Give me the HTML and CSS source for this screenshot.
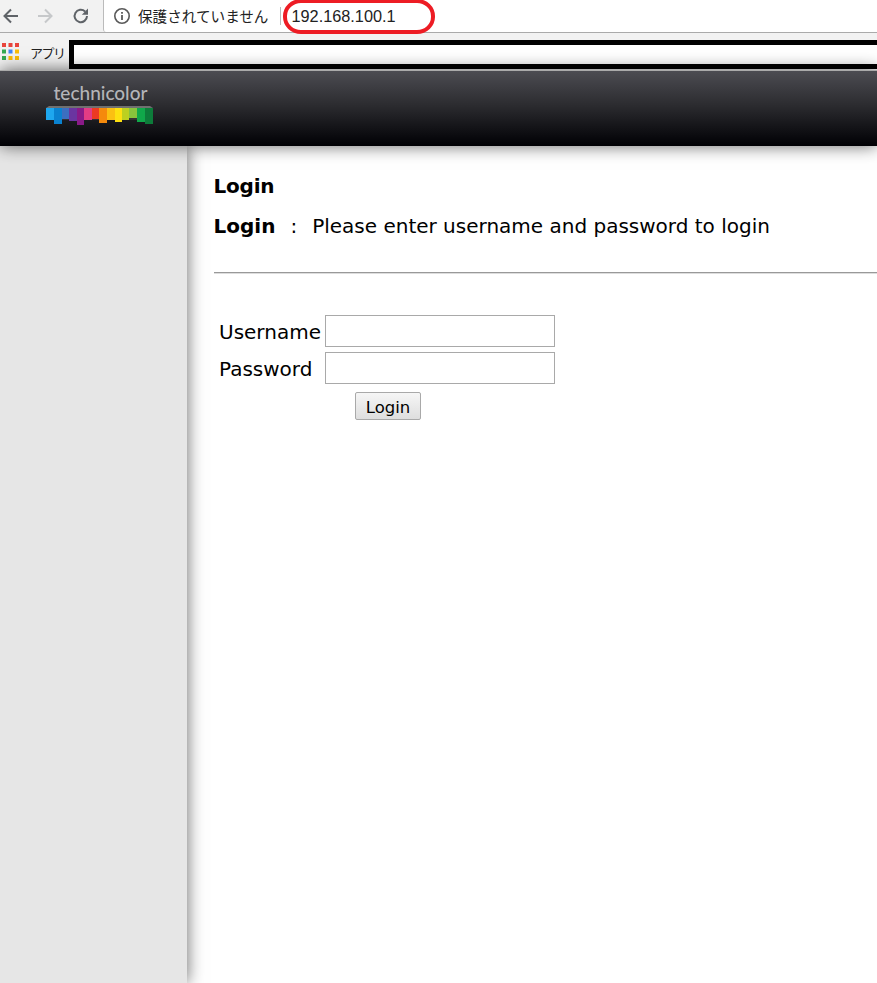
FILE: index.html
```html
<!DOCTYPE html>
<html lang="ja">
<head>
<meta charset="utf-8">
<title>Login</title>
<link rel="stylesheet" href="styles.css">
</head>
<body>
<div class="toolbar">
  <svg class="nav-icon back" viewBox="0 0 18 18"><path d="M16 9H3M9 2.5 2.5 9 9 15.5" fill="none" stroke="#5f6368" stroke-width="2"/></svg>
  <svg class="nav-icon forward" viewBox="0 0 18 18"><path d="M2 9h13M9 2.5 15.5 9 9 15.5" fill="none" stroke="#c6c8ca" stroke-width="2"/></svg>
  <svg class="nav-icon reload" viewBox="0 0 18 18"><path d="M15 9a6.2 6.2 0 1 1-1.9-4.5" fill="none" stroke="#5f6368" stroke-width="2"/><path d="M16 1.5v6.2H9.800z" fill="#5f6368"/></svg>
  <div class="omnibox">
    <svg class="info-icon" viewBox="0 0 18 18"><circle cx="9" cy="9" r="7.2" fill="none" stroke="#5a5a5a" stroke-width="1.600"/><path d="M8.100 8h1.800v5H8.100zM8.100 5h1.800v1.800H8.100z" fill="#5a5a5a"/></svg>
    <span class="security">保護されていません</span>
    <span class="omni-sep"></span>
    <span class="url">192.168.100.1</span>
    <span class="url-mark"></span>
  </div>
</div>
<div class="bookmarks">
  <svg class="apps-icon" viewBox="0 0 18 18">
    <rect x="0" y="0" width="4" height="4" fill="#e8453c"/><rect x="6.500" y="0" width="4" height="4" fill="#e8453c"/><rect x="13" y="0" width="4" height="4" fill="#e8453c"/>
    <rect x="0" y="6.500" width="4" height="4" fill="#34a853"/><rect x="6.500" y="6.500" width="4" height="4" fill="#4285f4"/><rect x="13" y="6.500" width="4" height="4" fill="#fbbc05"/>
    <rect x="0" y="13" width="4" height="4" fill="#34a853"/><rect x="6.500" y="13" width="4" height="4" fill="#fbbc05"/><rect x="13" y="13" width="4" height="4" fill="#fbbc05"/>
  </svg>
  <span class="apps-label">アプリ</span>
  <div class="redaction"></div>
</div>
<header class="masthead">
  <div class="logo">
    <span class="logo-word">technicolor</span>
    <svg class="logo-bar" viewBox="0 0 107 20" preserveAspectRatio="none">
      <path d="M0 4 3 1H104L107 4V15H0Z" fill="#333"/>
      <path d="M0 3H8V15H0Z" fill="#1ea7ee"/><path d="M8 3H16V19H8Z" fill="#0a82d0"/>
      <path d="M16 3H23V14H16Z" fill="#3c6fc0"/><path d="M23 3H31V16H23Z" fill="#6a35a0"/>
      <path d="M31 3H38V20H31Z" fill="#8a1a88"/><path d="M38 3H46V15H38Z" fill="#e23c84"/>
      <path d="M46 3H53V14H46Z" fill="#ec3a22"/><path d="M53 3H61V18H53Z" fill="#f58a0c"/>
      <path d="M61 3H69V15H61Z" fill="#fbc012"/><path d="M69 3H76V17H69Z" fill="#fde010"/>
      <path d="M76 3H83V15H76Z" fill="#bcd020"/><path d="M83 3H91V13H83Z" fill="#88c43c"/>
      <path d="M91 3H99V17H91Z" fill="#10a84a"/><path d="M99 3H107V19H99Z" fill="#0d7c3a"/>
      <path d="M3 1H104L107 3H0Z" fill="#fff" opacity=".3"/>
    </svg>
  </div>
</header>
<div class="page">
  <aside class="sidebar"></aside>
  <main class="content">
    <h1 class="title">Login</h1>
    <p class="intro"><b>Login</b><span class="colon">:</span>Please enter username and password to login</p>
    <hr class="rule">
    <form class="login-form">
      <label class="field-label" for="user">Username</label>
      <input class="field" id="user" type="text">
      <label class="field-label" for="pass">Password</label>
      <input class="field" id="pass" type="password">
      <button class="submit" type="button">Login</button>
    </form>
  </main>
</div>
</body>
</html>
```
FILE: styles.css
```css
html, body {
  margin: 0;
  padding: 0;
  height: 983px;
  overflow: hidden;
  background: #fff;
  color: #000;
  font-family: "DejaVu Sans", sans-serif;
}

.toolbar {
  display: flex;
  align-items: center;
  height: 32px;
  background: #f2f2f2;
  border-bottom: 1px solid #aaa;
  padding-left: 2px;
  box-sizing: content-box;
}
.nav-icon { width: 18px; height: 18px; flex: none; }
.forward { margin-left: 16px; }
.reload { margin-left: 18px; }

.omnibox {
  position: relative;
  display: flex;
  align-items: center;
  flex: 1;
  height: 32px;
  margin-left: 13px;
  box-sizing: border-box;
  background: #fff;
  border-left: 1px solid #bbb;
  border-bottom-left-radius: 3px;
  padding-left: 9px;
  font-family: "Liberation Sans", "Noto Sans CJK JP", sans-serif;
  font-size: 15px;
  color: #222;
}
.info-icon { width: 18px; height: 18px; flex: none; }
.security {
  margin-left: 7px;
  font-family: "Noto Sans CJK JP", sans-serif;
  font-size: 14.600px;
  line-height: 20px;
}
.omni-sep { width: 1px; height: 18px; background: #bbb; margin-left: 12px; }
.url { margin-left: 10px; font-size: 16.300px; }
.url-mark {
  position: absolute;
  left: 179px;
  top: -1px;
  width: 152px;
  height: 35px;
  box-sizing: border-box;
  border: 4px solid #ed1c24;
  border-radius: 18px / 17px;
}

.bookmarks {
  display: flex;
  align-items: center;
  height: 37px;
  background: #f2f2f2;
  box-sizing: border-box;
  overflow: hidden;
}
.apps-icon { width: 18px; height: 18px; margin-left: 2px; flex: none; }
.apps-label {
  margin: 1px 0 0 10px;
  font-family: "Noto Sans CJK JP", sans-serif;
  font-size: 13px;
  letter-spacing: -1.500px;
  color: #222;
  width: 39px;
  flex: none;
}
.redaction {
  flex: 1;
  height: 29px;
  margin-top: 6px;
  box-sizing: border-box;
  background: #fff;
  border: 5px solid #000;
  border-right: 0;
}

.masthead {
  height: 76px;
  box-sizing: border-box;
  border-top: 1px solid #aaa;
  background: linear-gradient(#4c4c52, #2c2c30 45%, #000004);
  padding: 11px 0 0 46px;
  position: relative;
  z-index: 2;
  box-shadow: 0 0 16px rgba(0, 0, 0, .6);
}
.logo { display: flex; flex-direction: column; width: 107px; }
.logo-word {
  font-family: "Lato", sans-serif;
  font-size: 19px;
  font-weight: 500;
  line-height: 22px;
  color: #b4b4b8;
  text-align: center;
  margin-left: 2px;
}
.logo-bar { width: 107px; height: 20px; margin-top: 1px; }

.page { display: flex; height: 837px; }
.sidebar {
  width: 187px;
  flex: none;
  background: #e6e6e6;
  position: relative;
  z-index: 1;
  box-shadow: 0 0 16px rgba(0, 0, 0, .6);
}
.content { flex: 1; padding: 28px 0 0 26.500px; min-width: 0; }
.title { margin: 0; font-size: 20px; letter-spacing: -.2px; line-height: 24px; font-weight: bold; }
.intro { margin: 16px 0 0; font-size: 20px; line-height: 24px; white-space: nowrap; }
.colon { margin: 0 15px; }
.rule {
  margin: 34px 0 0;
  border: 0;
  border-top: 1px solid #999;
  border-bottom: 1px solid #ddd;
}

.login-form {
  display: grid;
  grid-template-columns: 106px 230px;
  grid-auto-rows: 32px;
  row-gap: 5px;
  margin: 41px 0 0 5.500px;
  align-items: center;
}
.field-label { font-size: 20px; line-height: 24px; padding-top: 2px; white-space: nowrap; }
.field {
  width: 230px;
  height: 32px;
  box-sizing: border-box;
  margin: 0;
  border: 1px solid #a9a9a9;
  background: #fff;
}
.submit {
  grid-column: 2;
  width: 66px;
  height: 28px;
  margin: 1px 0 0 30px;
  padding: 3px 0 0;
  border: 1px solid #a9a9a9;
  border-radius: 2px;
  background: linear-gradient(#f6f6f6, #dedede);
  font-family: "DejaVu Sans", sans-serif;
  font-size: 16.500px;
  color: #000;
}
```
